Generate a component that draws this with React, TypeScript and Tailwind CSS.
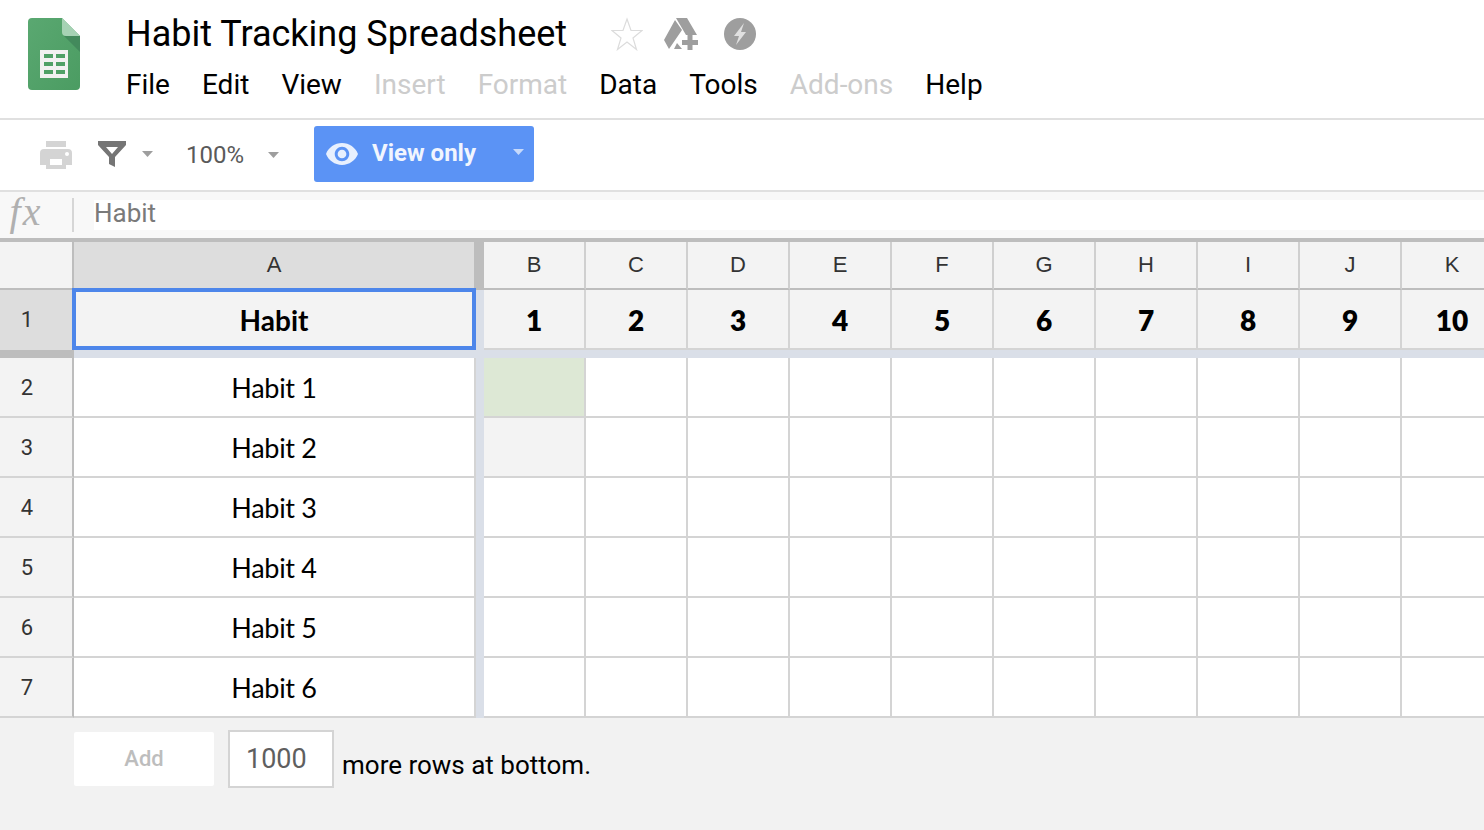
import React from "react";

const columns = ["B", "C", "D", "E", "F", "G", "H", "I", "J", "K"];
const menus = [
  { label: "File", off: false },
  { label: "Edit", off: false },
  { label: "View", off: false },
  { label: "Insert", off: true },
  { label: "Format", off: true },
  { label: "Data", off: false },
  { label: "Tools", off: false },
  { label: "Add-ons", off: true },
  { label: "Help", off: false },
];
const rows = [
  { n: 2, name: "Habit 1" },
  { n: 3, name: "Habit 2" },
  { n: 4, name: "Habit 3" },
  { n: 5, name: "Habit 4" },
  { n: 6, name: "Habit 5" },
  { n: 7, name: "Habit 6" },
];

const SheetsLogo = () => (
  <svg width="52" height="72" viewBox="0 0 52 72">
    <defs>
      <linearGradient id="sheet" x1="0" y1="0" x2="1" y2="1">
        <stop offset="0" stopColor="#5aa871" />
        <stop offset="1" stopColor="#4b9c62" />
      </linearGradient>
    </defs>
    <path d="M4 0h30l18 18v50a4 4 0 0 1-4 4H4a4 4 0 0 1-4-4V4a4 4 0 0 1 4-4z" fill="url(#sheet)" />
    <path d="M36 18l16 16V18z" fill="#438a5c" />
    <path d="M34 0l18 18H38a4 4 0 0 1-4-4z" fill="#a6d2b4" />
    <path d="M12 32h28v28H12z" fill="#f1f1f1" />
    <path d="M16 36h9v4h-9zM28 36h9v4h-9zM16 44h9v4h-9zM28 44h9v4h-9zM16 52h9v4h-9zM28 52h9v4h-9z" fill="#4fa066" />
  </svg>
);

const Caret = ({ color = "#9e9e9e" }: { color?: string }) => (
  <svg width="11" height="6" viewBox="0 0 11 6">
    <path d="M0 0h11L5.500 6z" fill={color} />
  </svg>
);

const App = () => {
  return (
    <div className="h-[830px] w-[1484px] overflow-hidden bg-white font-['Roboto',sans-serif]">
      {/* title and menus */}
      <div className="flex h-[120px] border-b-2 border-[#e0e0e0]">
        <div className="w-[126px] shrink-0 pl-[28px] pt-[18px]">
          <SheetsLogo />
        </div>
        <div>
          <div className="flex h-[51px] items-center pt-[17px]">
            <span className="text-[36px] leading-[36px] text-black">Habit Tracking Spreadsheet</span>
            <svg className="ml-[44px]" width="32" height="34" viewBox="0 0 32 34">
              <path d="M16 2l4 11.500h11l-9 7.500 3.500 11.500L16 25l-9.500 7.500L10 21l-9-7.500h11z" fill="none" stroke="#dcdcdc" strokeWidth="1.200" />
            </svg>
            <svg className="ml-[21px]" width="36" height="34" viewBox="0 0 36 34">
              <path d="M12 1h11l10 17H22zM11 3L0 23l5 9L18 13zM10 32l3-6 5 6z" fill="#9e9e9e" />
              <path d="M18 18h17v15H18z" fill="#fff" />
              <path d="M23.500 18h5v5h5.500v5h-5.500v5h-5v-5H18v-5h5.500z" fill="#9e9e9e" />
            </svg>
            <svg className="ml-[24px]" width="32" height="32" viewBox="0 0 32 32">
              <circle cx="16" cy="16" r="16" fill="#9e9e9e" />
              <path d="M20 5l-10 13h5l-3 9 10-13h-5z" fill="#e0e0e0" />
            </svg>
          </div>
          <div className="mt-[16px] flex gap-[32px] text-[28px] leading-[36px]">
            {menus.map((m) => (
              <span key={m.label} className={m.off ? "text-[#cccccc]" : "text-black"}>
                {m.label}
              </span>
            ))}
          </div>
        </div>
      </div>

      {/* toolbar */}
      <div className="flex h-[72px] items-center border-b-2 border-[#e0e0e0] pl-[40px]">
        <svg width="32" height="28" viewBox="0 0 32 28">
          <path d="M6 0h20v6H6zM4 8h24a4 4 0 0 1 4 4v12h-6v4H6v-4H0V12a4 4 0 0 1 4-4z" fill="#d4d4d4" />
          <path d="M10 18h12v6H10z" fill="#fff" />
          <circle cx="27" cy="13" r="2" fill="#fff" />
        </svg>
        <svg className="ml-[26px] mb-[2px]" width="28" height="26" viewBox="0 0 28 26">
          <path d="M0 0h28v4L17 16v10l-6-3v-7L0 4zM8 6l6 7 6-7z" fill="#757575" fillRule="evenodd" />
        </svg>
        <span className="ml-[16px] mb-[2px]"><Caret /></span>
        <span className="ml-[33px] w-[58px] text-[24px] whitespace-nowrap text-[#5a5a5a]">100%</span>
        <span className="ml-[24px]"><Caret /></span>
        <div className="mb-[2px] ml-[35px] flex h-[56px] w-[220px] items-center rounded-[3px] bg-[#5b93f5] pl-[12px]">
          <svg width="32" height="32" viewBox="1 1 22 22">
            <path
              d="M12 4.500C7 4.500 2.730 7.610 1 12c1.730 4.390 6 7.500 11 7.500s9.270-3.110 11-7.500c-1.730-4.390-6-7.500-11-7.500zM12 17c-2.760 0-5-2.240-5-5s2.240-5 5-5 5 2.240 5 5-2.240 5-5 5zm0-8c-1.660 0-3 1.340-3 3s1.340 3 3 3 3-1.340 3-3-1.340-3-3-3z"
              fill="#e8f0fe"
            />
          </svg>
          <span className="mb-[2px] ml-[14px] w-[141px] text-[24px] font-bold text-[#f1f5fe]">View only</span>
          <span className="mb-[4px]"><Caret color="#c6d9fb" /></span>
        </div>
      </div>

      {/* formula bar */}
      <div className="flex h-[46px] items-center bg-[#f8f8f8]">
        <div className="flex w-[72px] shrink-0 justify-center pr-[20px] pb-[6px] font-['Liberation_Serif',serif] text-[40px] leading-[40px] tracking-[2px] text-[#b0b0b0] italic">
          fx
        </div>
        <div className="h-[34px] w-[2px] bg-[#d6d6d6]" />
        <div className="ml-[20px] flex h-[30px] flex-1 items-center bg-white pb-[4px] text-[26px] text-[#7a7a7a]">Habit</div>
      </div>

      {/* grid */}
      <div className="relative border-t-4 border-[#bdbdbd] font-['Lato',sans-serif]">
        <div className="grid grid-cols-[74px_400px_10px_repeat(10,102px)] grid-rows-[48px_60px_8px_repeat(6,60px)]">
          <div className="border-r-2 border-b-2 border-[#bdbdbd] bg-[#f3f3f3]" />
          <div className="flex items-center justify-center border-b-2 border-[#bdbdbd] bg-[#dddddd] pb-[2px] font-['Liberation_Sans',sans-serif] text-[22px] text-[#333333]">A</div>
          <div className="bg-[#bdbdbd]" />
          {columns.map((c) => (
            <div key={c} className="flex items-center justify-center border-r-2 border-b-2 border-[#cfcfcf] border-b-[#bdbdbd] bg-[#f3f3f3] pb-[2px] font-['Liberation_Sans',sans-serif] text-[22px] text-[#333333]">
              {c}
            </div>
          ))}

          <div className="flex items-center justify-center border-r-2 border-[#bdbdbd] bg-[#dddddd] pr-[18px] pb-[2px] font-['Roboto',sans-serif] text-[22px] text-[#333333]">1</div>
          <div className="flex items-center justify-center bg-[#f3f3f3] text-[28px] font-bold text-black">Habit</div>
          <div className="bg-[#dadfe8]" />
          {columns.map((c, i) => (
            <div key={c} className="flex items-center justify-center border-r-2 border-b-2 border-[#d4d4d4] bg-[#f3f3f3] pt-[2px] text-[28px] font-extrabold text-black">
              {i + 1}
            </div>
          ))}

          <div className="bg-[#bdbdbd]" />
          <div className="bg-[#dadfe8]" />
          <div className="bg-[#dadfe8]" />
          <div className="col-span-10 bg-[#dadfe8]" />

          {rows.map((r) => (
            <React.Fragment key={r.n}>
              <div className="flex items-center justify-center border-r-2 border-b-2 border-[#bdbdbd] border-b-[#d4d4d4] bg-[#f3f3f3] pr-[18px] font-['Roboto',sans-serif] text-[22px] text-[#333333]">
                {r.n}
              </div>
              <div className="flex items-center justify-center border-b-2 border-[#d4d4d4] pt-[2px] text-[27px] tracking-[-0.3px] text-black">{r.name}</div>
              <div className="border-l-2 border-[#d4d4d4] bg-[#dadfe8]" />
              {columns.map((c, i) => (
                <div
                  key={c}
                  className={`border-r-2 border-b-2 border-[#d4d4d4] ${i === 0 && r.n === 2 ? "bg-[#dde8d5]" : i === 0 && r.n === 3 ? "bg-[#f3f3f3]" : "bg-white"}`}
                />
              ))}
            </React.Fragment>
          ))}
        </div>
        {/* selected cell */}
        <div className="pointer-events-none absolute top-[46px] left-[72px] h-[62px] w-[404px] border-4 border-[#4d86ea]" />
      </div>

      {/* add rows */}
      <div className="flex h-[112px] bg-[#f2f2f2] pl-[74px]">
        <div className="mt-[14px] flex h-[54px] w-[140px] items-center justify-center rounded-[2px] bg-white pb-[2px] text-[22px] font-medium text-[#bdbdbd]">Add</div>
        <div className="mt-[12px] ml-[14px] flex h-[58px] w-[106px] items-center border-2 border-[#d4d4d4] bg-white pl-[16px] text-[27px] text-[#5f5f5f]">1000</div>
        <span className="mt-[29px] ml-[8px] text-[26px] leading-[36px] text-black">more rows at bottom.</span>
      </div>
    </div>
  );
};

export default App;
